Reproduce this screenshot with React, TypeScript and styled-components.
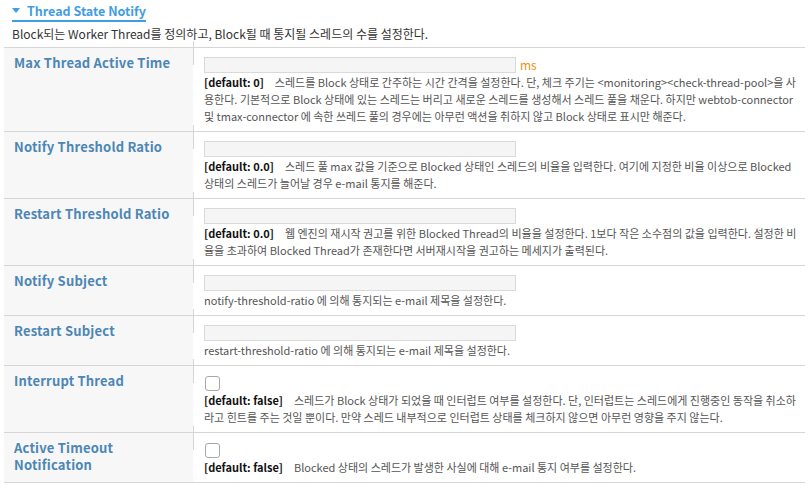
import React from 'react';
import styled, { createGlobalStyle } from 'styled-components';

const GlobalStyle = createGlobalStyle`
  html, body {
    margin: 0;
    padding: 0;
    background: #fff;
  }
  body {
    font-family: 'Noto Sans', 'Noto Sans CJK KR', sans-serif;
  }
`;

type Field = {
  label: string[];
  kind: 'text' | 'check';
  unit?: string;
  def?: string;
  desc: string;
};

const fields: Field[] = [
  {
    label: ['Max Thread Active Time'],
    kind: 'text',
    unit: 'ms',
    def: '[default: 0]',
    desc:
      '스레드를 Block 상태로 간주하는 시간 간격을 설정한다. 단, 체크 주기는 <monitoring><check-thread-pool>을 사용한다. 기본적으로 Block 상태에 있는 스레드는 버리고 새로운 스레드를 생성해서 스레드 풀을 채운다. 하지만 webtob-connector 및 tmax-connector 에 속한 쓰레드 풀의 경우에는 아무런 액션을 취하지 않고 Block 상태로 표시만 해준다.',
  },
  {
    label: ['Notify Threshold Ratio'],
    kind: 'text',
    def: '[default: 0.0]',
    desc:
      '스레드 풀 max 값을 기준으로 Blocked 상태인 스레드의 비율을 입력한다. 여기에 지정한 비율 이상으로 Blocked 상태의 스레드가 늘어날 경우 e-mail 통지를 해준다.',
  },
  {
    label: ['Restart Threshold Ratio'],
    kind: 'text',
    def: '[default: 0.0]',
    desc:
      '웹 엔진의 재시작 권고를 위한 Blocked Thread의 비율을 설정한다. 1보다 작은 소수점의 값을 입력한다. 설정한 비율을 초과하여 Blocked Thread가 존재한다면 서버재시작을 권고하는 메세지가 출력된다.',
  },
  {
    label: ['Notify Subject'],
    kind: 'text',
    desc: 'notify-threshold-ratio 에 의해 통지되는 e-mail 제목을 설정한다.',
  },
  {
    label: ['Restart Subject'],
    kind: 'text',
    desc: 'restart-threshold-ratio 에 의해 통지되는 e-mail 제목을 설정한다.',
  },
  {
    label: ['Interrupt Thread'],
    kind: 'check',
    def: '[default: false]',
    desc:
      '스레드가 Block 상태가 되었을 때 인터럽트 여부를 설정한다. 단, 인터럽트는 스레드에게 진행중인 동작을 취소하라고 힌트를 주는 것일 뿐이다. 만약 스레드 내부적으로 인터럽트 상태를 체크하지 않으면 아무런 영향을 주지 않는다.',
  },
  {
    label: ['Active Timeout', 'Notification'],
    kind: 'check',
    def: '[default: false]',
    desc: 'Blocked 상태의 스레드가 발생한 사실에 대해 e-mail 통지 여부를 설정한다.',
  },
];

export default function App() {
  return (
    <>
      <GlobalStyle />
      <Page>
        <Header>
          <SectionTitle>
            <svg width="8" height="5" viewBox="0 0 8 5">
              <path d="M0 0 L8 0 L4 5 Z" fill="#3f9de4" />
            </svg>
            Thread State Notify
          </SectionTitle>
          <Summary>Block되는 Worker Thread를 정의하고, Block될 때 통지될 스레드의 수를 설정한다.</Summary>
        </Header>
        <Table>
          {fields.map((f) => (
            <Row key={f.label.join(' ')}>
              <LabelCell>
                {f.label.map((l) => (
                  <div key={l}>{l}</div>
                ))}
              </LabelCell>
              <ValueCell>
                <Control>
                  {f.kind === 'text' ? <TextBox /> : <CheckBox />}
                  {f.unit && <Unit>{f.unit}</Unit>}
                </Control>
                <Desc>
                  {f.def && <Default>{f.def}</Default>}
                  {f.desc}
                </Desc>
              </ValueCell>
            </Row>
          ))}
        </Table>
      </Page>
    </>
  );
}

const Page = styled.div`
  width: 801px;
  padding: 0 4px;
`;

const Header = styled.div`
  padding: 2px 0 5px 8px;
`;

const SectionTitle = styled.div`
  display: flex;
  align-items: center;
  gap: 7px;
  width: fit-content;
  height: 18px;
  font-family: 'Noto Sans CJK KR', sans-serif;
  font-weight: 700;
  font-size: 12.5px;
  line-height: 18px;
  color: #3f9de4;
  border-bottom: 2px solid #3f9de4;
  svg {
    margin-top: -1px;
  }
`;

const Summary = styled.div`
  font-family: 'Noto Sans CJK KR', sans-serif;
  font-size: 12px;
  line-height: 16px;
  color: #333;
  margin-top: 4px;
`;

const Table = styled.div`
  border-bottom: 1px solid #d6d6d6;
`;

const Row = styled.div`
  display: grid;
  grid-template-columns: 189px 1fr;
  border-top: 1px solid #d6d6d6;
`;

const LabelCell = styled.div`
  background: #f7f7f7;
  padding: 6px 10px 4px;
  font-family: 'Noto Sans CJK KR', sans-serif;
  font-weight: 700;
  font-size: 13px;
  line-height: 17px;
  letter-spacing: 0.2px;
  color: #4c86b5;
`;

const ValueCell = styled.div`
  position: relative;
  padding: 9px 4px 6px 11px;
  &::before {
    content: '';
    position: absolute;
    left: 0;
    top: -7px;
    width: 1px;
    height: 24px;
    background: #d6d6d6;
  }
`;

const Control = styled.div`
  display: flex;
  align-items: center;
  gap: 4px;
  height: 16px;
`;

const TextBox = styled.div`
  box-sizing: border-box;
  width: 312px;
  height: 16px;
  background: #f5f5f5;
  border: 1px solid #d9d9d9;
`;

const CheckBox = styled.div`
  box-sizing: border-box;
  width: 15px;
  height: 15px;
  margin-left: 1px;
  background: #fff;
  border: 1px solid #a8a8a8;
  border-radius: 3px;
`;

const Unit = styled.span`
  font-family: 'Noto Sans CJK KR', sans-serif;
  font-size: 12px;
  line-height: 16px;
  color: #e8920d;
`;

const Desc = styled.div`
  margin-top: 1px;
  font-family: 'Noto Sans CJK KR', sans-serif;
  font-size: 11px;
  line-height: 17px;
  color: #555;
`;

const Default = styled.span`
  font-weight: 700;
  color: #111;
  margin-right: 11px;
`;
